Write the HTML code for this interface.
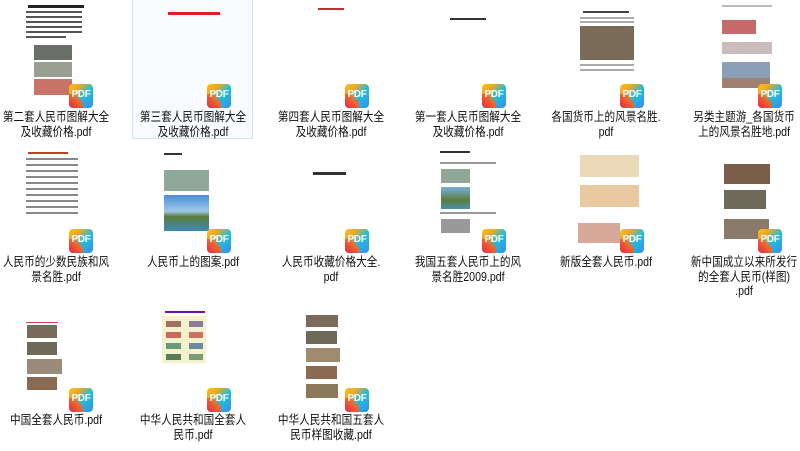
<!DOCTYPE html><html><head><meta charset="utf-8"><style>
*{margin:0;padding:0;box-sizing:border-box}
body{width:800px;height:451px;background:#fff;position:relative;overflow:hidden;font-family:"Liberation Sans","Noto Sans CJK SC",sans-serif}
.l{position:absolute;width:134px;text-align:center;font-size:12.5px;line-height:14.5px;color:#111;white-space:nowrap;transform:scaleX(.85)}
.p{position:absolute;width:24px;height:24px;border-radius:4px;background:linear-gradient(135deg,#f7c21a 0%,#f5a623 25%,#1fc0d8 55%,#3a8cf0 100%);overflow:hidden}
.p:before{content:"";position:absolute;left:0;bottom:0;width:14px;height:14px;background:linear-gradient(45deg,#e8254a,#f06a2a 60%,transparent 80%)}
.p span{position:absolute;left:0;top:5px;width:24px;text-align:center;color:#fff;font:bold 10px "Liberation Sans",sans-serif;letter-spacing:-.3px}
.r{position:absolute}
.tx{position:absolute;height:1.5px;background:#555}
</style></head><body>
<div class="r" style="left:132px;top:-2px;width:121px;height:141px;border:1px solid #cfe3f7;background:#f8fbff"></div>

<div class="r" style="left:28px;top:5px;width:56px;height:3px;background:#222"></div>
<div class="tx" style="left:26px;top:11px;width:56px"></div><div class="tx" style="left:26px;top:16px;width:56px"></div>
<div class="tx" style="left:26px;top:21px;width:56px"></div><div class="tx" style="left:26px;top:26px;width:56px"></div>
<div class="tx" style="left:26px;top:31px;width:56px"></div><div class="tx" style="left:26px;top:36px;width:40px"></div>
<div class="r" style="left:34px;top:45px;width:38px;height:15px;background:#6b6f6a"></div>
<div class="r" style="left:34px;top:62px;width:38px;height:15px;background:#9a9e93"></div>
<div class="r" style="left:34px;top:79px;width:38px;height:16px;background:#c9736a"></div>
<div class="r" style="left:168px;top:12px;width:52px;height:3px;background:#e02020"></div>
<div class="r" style="left:318px;top:8px;width:26px;height:2px;background:#c03030"></div>
<div class="r" style="left:450px;top:18px;width:36px;height:2px;background:#333"></div>
<div class="r" style="left:583px;top:11px;width:46px;height:2px;background:#444"></div>
<div class="tx" style="left:580px;top:17px;width:54px;background:#aaa"></div><div class="tx" style="left:580px;top:21px;width:54px;background:#aaa"></div>
<div class="r" style="left:580px;top:26px;width:54px;height:34px;background:#7a6a58"></div>
<div class="tx" style="left:580px;top:64px;width:54px;background:#aaa"></div><div class="tx" style="left:580px;top:69px;width:54px;background:#aaa"></div>
<div class="r" style="left:722px;top:5px;width:50px;height:2px;background:#bbb"></div>
<div class="r" style="left:722px;top:20px;width:34px;height:14px;background:#c56a6a"></div>
<div class="r" style="left:722px;top:42px;width:50px;height:12px;background:#cbb"></div>
<div class="r" style="left:722px;top:62px;width:48px;height:16px;background:#8aa0b8"></div>
<div class="r" style="left:722px;top:78px;width:48px;height:10px;background:#a08070"></div>

<div class="r" style="left:28px;top:152px;width:40px;height:2px;background:#c04020"></div>
<div class="tx" style="left:26px;top:158px;width:52px;background:#888"></div><div class="tx" style="left:26px;top:164px;width:52px;background:#888"></div>
<div class="tx" style="left:26px;top:170px;width:52px;background:#888"></div><div class="tx" style="left:26px;top:176px;width:52px;background:#888"></div>
<div class="tx" style="left:26px;top:182px;width:52px;background:#888"></div><div class="tx" style="left:26px;top:188px;width:52px;background:#888"></div>
<div class="tx" style="left:26px;top:194px;width:52px;background:#888"></div><div class="tx" style="left:26px;top:200px;width:52px;background:#888"></div>
<div class="tx" style="left:26px;top:206px;width:52px;background:#888"></div><div class="tx" style="left:26px;top:212px;width:52px;background:#888"></div>
<div class="r" style="left:164px;top:153px;width:18px;height:2px;background:#333"></div>
<div class="r" style="left:164px;top:170px;width:45px;height:21px;background:#8fa89a"></div>
<div class="r" style="left:164px;top:195px;width:45px;height:36px;background:linear-gradient(#4b8fd6,#9cc8ea 45%,#5a7d3a 60%,#3c88b8)"></div>
<div class="r" style="left:313px;top:172px;width:33px;height:3px;background:#333"></div>
<div class="r" style="left:440px;top:151px;width:30px;height:2px;background:#333"></div>
<div class="tx" style="left:440px;top:162px;width:56px;background:#999"></div>
<div class="r" style="left:441px;top:169px;width:29px;height:14px;background:#8fa89a"></div>
<div class="r" style="left:441px;top:187px;width:29px;height:22px;background:linear-gradient(#7ab0e0,#5a7d3a 60%,#4a90b0)"></div>
<div class="tx" style="left:440px;top:212px;width:56px;background:#999"></div>
<div class="r" style="left:441px;top:219px;width:29px;height:14px;background:#999"></div>
<div class="r" style="left:580px;top:155px;width:59px;height:22px;background:#ecd9b8"></div>
<div class="r" style="left:580px;top:185px;width:59px;height:22px;background:#e8c9a0"></div>
<div class="r" style="left:578px;top:223px;width:42px;height:20px;background:#d6a89a"></div>
<div class="r" style="left:724px;top:164px;width:46px;height:20px;background:#7a5e4a"></div>
<div class="r" style="left:724px;top:190px;width:42px;height:19px;background:#6e6a5a"></div>
<div class="r" style="left:724px;top:219px;width:45px;height:20px;background:#8a7a6a"></div>

<div class="r" style="left:26px;top:322px;width:32px;height:1px;background:#d04040"></div>
<div class="r" style="left:27px;top:325px;width:30px;height:13px;background:#7a6a5a"></div>
<div class="r" style="left:27px;top:342px;width:30px;height:13px;background:#6e6a5a"></div>
<div class="r" style="left:27px;top:359px;width:35px;height:15px;background:#9a8a7a"></div>
<div class="r" style="left:27px;top:377px;width:30px;height:13px;background:#8a6a50"></div>
<div class="r" style="left:165px;top:311px;width:40px;height:2px;background:#7010b0"></div>
<div class="r" style="left:162px;top:316px;width:44px;height:47px;background:#f4f2cc"></div>
<div class="r" style="left:166px;top:321px;width:15px;height:6px;background:#a07060"></div><div class="r" style="left:189px;top:321px;width:14px;height:6px;background:#8a7a9a"></div>
<div class="r" style="left:166px;top:332px;width:15px;height:6px;background:#c86a5a"></div><div class="r" style="left:189px;top:332px;width:14px;height:6px;background:#d07060"></div>
<div class="r" style="left:166px;top:343px;width:15px;height:6px;background:#6a9a7a"></div><div class="r" style="left:189px;top:343px;width:14px;height:6px;background:#6a8aa0"></div>
<div class="r" style="left:166px;top:354px;width:15px;height:6px;background:#5a7a5a"></div><div class="r" style="left:189px;top:354px;width:14px;height:6px;background:#7a9a7a"></div>
<div class="r" style="left:306px;top:315px;width:32px;height:12px;background:#7a6a5a"></div>
<div class="r" style="left:306px;top:331px;width:31px;height:13px;background:#6e6a5a"></div>
<div class="r" style="left:306px;top:348px;width:34px;height:14px;background:#a08a70"></div>
<div class="r" style="left:306px;top:366px;width:31px;height:13px;background:#8a6a50"></div>
<div class="r" style="left:306px;top:384px;width:32px;height:14px;background:#8a7a5a"></div>

<div class="p" style="left:69px;top:84px"><span>PDF</span></div>
<div class="p" style="left:207px;top:84px"><span>PDF</span></div>
<div class="p" style="left:345px;top:84px"><span>PDF</span></div>
<div class="p" style="left:482px;top:84px"><span>PDF</span></div>
<div class="p" style="left:620px;top:84px"><span>PDF</span></div>
<div class="p" style="left:758px;top:84px"><span>PDF</span></div>
<div class="p" style="left:69px;top:229px"><span>PDF</span></div>
<div class="p" style="left:207px;top:229px"><span>PDF</span></div>
<div class="p" style="left:345px;top:229px"><span>PDF</span></div>
<div class="p" style="left:482px;top:229px"><span>PDF</span></div>
<div class="p" style="left:620px;top:229px"><span>PDF</span></div>
<div class="p" style="left:758px;top:229px"><span>PDF</span></div>
<div class="p" style="left:69px;top:388px"><span>PDF</span></div>
<div class="p" style="left:207px;top:388px"><span>PDF</span></div>
<div class="p" style="left:345px;top:388px"><span>PDF</span></div>

<div class="l" style="left:-11px;top:110px">第二套人民币图解大全<br>及收藏价格.pdf</div>
<div class="l" style="left:126px;top:110px">第三套人民币图解大全<br>及收藏价格.pdf</div>
<div class="l" style="left:264px;top:110px">第四套人民币图解大全<br>及收藏价格.pdf</div>
<div class="l" style="left:401px;top:110px">第一套人民币图解大全<br>及收藏价格.pdf</div>
<div class="l" style="left:539px;top:110px">各国货币上的风景名胜.<br>pdf</div>
<div class="l" style="left:677px;top:110px">另类主题游_各国货币<br>上的风景名胜地.pdf</div>
<div class="l" style="left:-11px;top:255px">人民币的少数民族和风<br>景名胜.pdf</div>
<div class="l" style="left:126px;top:255px">人民币上的图案.pdf</div>
<div class="l" style="left:264px;top:255px">人民币收藏价格大全.<br>pdf</div>
<div class="l" style="left:401px;top:255px">我国五套人民币上的风<br>景名胜2009.pdf</div>
<div class="l" style="left:539px;top:255px">新版全套人民币.pdf</div>
<div class="l" style="left:677px;top:255px">新中国成立以来所发行<br>的全套人民币(样图)<br>.pdf</div>
<div class="l" style="left:-11px;top:413px">中国全套人民币.pdf</div>
<div class="l" style="left:126px;top:413px">中华人民共和国全套人<br>民币.pdf</div>
<div class="l" style="left:264px;top:413px">中华人民共和国五套人<br>民币样图收藏.pdf</div>
</body></html>
